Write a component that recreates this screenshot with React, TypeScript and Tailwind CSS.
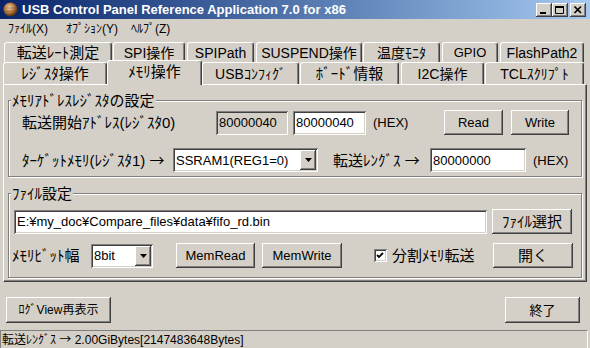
import React from 'react';

const raised =
  'bg-[#d4d0c8] shadow-[inset_-1px_-1px_0_#404040,inset_1px_1px_0_#ffffff,inset_-2px_-2px_0_#808080]';
const sunken =
  'shadow-[inset_1px_1px_0_#808080,inset_-1px_-1px_0_#ffffff,inset_2px_2px_0_#404040,inset_-2px_-2px_0_#d4d0c8]';

const Btn = ({ children, className = '' }: { children: React.ReactNode; className?: string }) => (
  <button type="button" className={`${raised} ${className} flex items-center justify-center leading-none`}>
    {children}
  </button>
);

const Field = ({ value, className = '', gray = false }: { value: string; className?: string; gray?: boolean }) => (
  <div
    className={`${sunken} ${gray ? 'bg-[#d4d0c8]' : 'bg-white'} ${className} flex items-center pl-[3px] text-[13px] leading-none`}
  >
    {value}
  </div>
);

const Combo = ({ value, className = '' }: { value: string; className?: string }) => (
  <div className={`${sunken} bg-white ${className} flex items-center p-[2px]`}>
    <span className="flex-1 pl-[1px] text-[13px] leading-none">{value}</span>
    <div className={`${raised} w-[16px] h-full flex items-center justify-center`}>
      <svg width="7" height="4" viewBox="0 0 7 4">
        <path d="M0 0h7L3.5 4z" fill="#000" />
      </svg>
    </div>
  </div>
);

// arrow glyph taken from the CJK font so it is wide like the original
const Arrow = () => <span className="font-['Noto_Sans_CJK_JP',sans-serif]">→</span>;

const tabBase =
  'flex items-center justify-center bg-[#d4d0c8] border-l border-t border-r border-white border-r-[#404040] rounded-t-[3px] shadow-[inset_-1px_0_0_#808080] leading-none whitespace-nowrap';

const topTabs = [
  { label: '転送ﾚｰﾄ測定', cls: 'ml-[1px] w-[108px] text-[15px]' },
  { label: 'SPI操作', cls: 'ml-[1px] w-[72px] text-[14px]' },
  { label: 'SPIPath', cls: 'ml-[2px] w-[67px] text-[14px]' },
  { label: 'SUSPEND操作', cls: 'ml-[2px] w-[106px] text-[14px]' },
  { label: '温度ﾓﾆﾀ', cls: 'ml-[1px] w-[77px] text-[14px]' },
  { label: 'GPIO', cls: 'ml-[2px] w-[56px] text-[13px]' },
  { label: 'FlashPath2', cls: 'ml-[2px] w-[84px] text-[14px]' },
];

const WinButton = ({ children, className = '' }: { children: React.ReactNode; className?: string }) => (
  <div className={`${raised} ${className} w-[16px] h-[14px] flex items-center justify-center`}>{children}</div>
);

export default function App() {
  return (
    <div className="w-[590px] h-[348px] overflow-hidden bg-[#d4d0c8] text-black font-['Liberation_Sans','Noto_Sans_CJK_JP',sans-serif] flex flex-col">
      {/* Title bar */}
      <div className="h-[19px] shrink-0 flex items-center bg-linear-to-r from-[#0a246a] to-[#a6caf0]">
        <svg width="15" height="15" viewBox="0 0 15 15" className="ml-[3px]">
          <defs>
            <radialGradient id="orb" cx="0.42" cy="0.38" r="0.62">
              <stop offset="0" stopColor="#f4dcb4" />
              <stop offset="0.55" stopColor="#b87a44" />
              <stop offset="1" stopColor="#4a2a12" />
            </radialGradient>
          </defs>
          <circle cx="7.5" cy="7.5" r="7" fill="url(#orb)" />
          <path d="M1.6 6h11.8M1.4 9h12.2" stroke="#8a5428" strokeWidth="1" opacity="0.6" />
        </svg>
        <span className="ml-[4px] text-white font-bold text-[13px] leading-none whitespace-nowrap">
          USB Control Panel Reference Application 7.0 for x86
        </span>
        <div className="ml-auto mr-[4px] flex items-center">
          <WinButton>
            <svg width="16" height="14" viewBox="0 0 16 14">
              <rect x="4" y="9" width="6" height="2" fill="#000" />
            </svg>
          </WinButton>
          <WinButton>
            <svg width="16" height="14" viewBox="0 0 16 14">
              <path d="M3.5 3.5h8v7h-8z" fill="none" stroke="#000" strokeWidth="1" />
              <rect x="3" y="3" width="9" height="2" fill="#000" />
            </svg>
          </WinButton>
          <WinButton className="ml-[2px]">
            <svg width="16" height="14" viewBox="0 0 16 14">
              <path d="M4.5 3.5l6.5 6.5M11 3.5l-6.5 6.5" stroke="#000" strokeWidth="1.7" />
            </svg>
          </WinButton>
        </div>
      </div>

      {/* Menu bar */}
      <div className="h-[19px] shrink-0 flex items-center text-[12px] leading-none">
        <span className="ml-[8px] w-[58px]">ﾌｧｲﾙ(X)</span>
        <span className="w-[65px]">ｵﾌﾟｼｮﾝ(Y)</span>
        <span>ﾍﾙﾌﾟ(Z)</span>
      </div>

      {/* Tab control */}
      <div className="px-[3px] pt-[4px] shrink-0">
        <div className="h-[18px] flex items-start">
          {topTabs.map((t) => (
            <div key={t.label} className={`${tabBase} ${t.cls} h-[20px]`}>
              {t.label}
            </div>
          ))}
        </div>
        <div className="h-[24px] flex items-start">
          <div className={`${tabBase} w-[104px] h-[22px] mt-[2px] text-[15px]`}>ﾚｼﾞｽﾀ操作</div>
          <div className={`${tabBase} relative z-10 w-[95px] h-[25px] pb-[3px] text-[15px]`}>ﾒﾓﾘ操作</div>
          <div className={`${tabBase} w-[97px] h-[22px] mt-[2px] text-[14px]`}>USBｺﾝﾌｨｸﾞ</div>
          <div className={`${tabBase} ml-[1px] w-[99px] h-[22px] mt-[2px] text-[15px]`}>ﾎﾞｰﾄﾞ情報</div>
          <div className={`${tabBase} ml-[2px] w-[83px] h-[22px] mt-[2px] text-[14px]`}>I2C操作</div>
          <div className={`${tabBase} ml-[1px] w-[99px] h-[22px] mt-[2px] text-[14px]`}>TCLｽｸﾘﾌﾟﾄ</div>
        </div>

        {/* Tab page */}
        <div className="h-[198px] border-t border-l border-r border-b border-white border-r-[#404040] border-b-[#404040] shadow-[inset_-1px_-1px_0_#808080] px-[4px] pt-[8px]">
          <fieldset className="min-w-0 border border-[#808080] shadow-[inset_1px_1px_0_#ffffff,1px_1px_0_#ffffff] pb-[4px]">
            <legend className="ml-[2px] px-[1px] bg-[#d4d0c8] text-[15px] leading-[15px]">ﾒﾓﾘｱﾄﾞﾚｽﾚｼﾞｽﾀの設定</legend>
            <div className="mt-[2px] h-[25px] flex items-center">
              <span className="ml-[13px] w-[194px] text-[15px] leading-none whitespace-nowrap">転送開始ｱﾄﾞﾚｽ(ﾚｼﾞｽﾀ0)</span>
              <Field value="80000040" gray className="w-[72px] h-[24px]" />
              <Field value="80000040" className="ml-[5px] w-[73px] h-[24px]" />
              <span className="ml-[7px] w-[71px] text-[13px] leading-none">(HEX)</span>
              <Btn className="w-[59px] h-[25px] text-[13px]">Read</Btn>
              <Btn className="ml-[8px] w-[58px] h-[25px] text-[13px]">Write</Btn>
            </div>
            <div className="mt-[13px] h-[24px] flex items-center">
              <span className="ml-[13px] w-[151px] text-[15px] leading-none whitespace-nowrap">
                ﾀｰｹﾞｯﾄﾒﾓﾘ(ﾚｼﾞｽﾀ1) <Arrow />
              </span>
              <Combo value="SSRAM1(REG1=0)" className="w-[145px] h-[24px]" />
              <span className="ml-[15px] w-[97px] text-[15px] leading-none whitespace-nowrap">
                転送ﾚﾝｸﾞｽ <Arrow />
              </span>
              <Field value="80000000" className="w-[96px] h-[24px]" />
              <span className="ml-[7px] text-[13px] leading-none">(HEX)</span>
            </div>
          </fieldset>

          <fieldset className="mt-[9px] min-w-0 border border-[#808080] shadow-[inset_1px_1px_0_#ffffff,1px_1px_0_#ffffff] pb-[9px]">
            <legend className="ml-[2px] px-[1px] bg-[#d4d0c8] text-[15px] leading-[15px]">ﾌｧｲﾙ設定</legend>
            <div className="mt-[8px] h-[25px] flex items-center">
              <Field value="E:¥my_doc¥Compare_files¥data¥fifo_rd.bin" className="ml-[5px] w-[473px] h-[24px]" />
              <Btn className="ml-[5px] w-[80px] h-[25px] text-[15px]">ﾌｧｲﾙ選択</Btn>
            </div>
            <div className="mt-[9px] h-[25px] flex items-center">
              <span className="ml-[3px] w-[79px] text-[15px] leading-none whitespace-nowrap">ﾒﾓﾘﾋﾞｯﾄ幅</span>
              <Combo value="8bit" className="w-[62px] h-[24px]" />
              <Btn className="ml-[23px] w-[79px] h-[25px] text-[13px]">MemRead</Btn>
              <Btn className="ml-[7px] w-[80px] h-[25px] text-[13px]">MemWrite</Btn>
              <div className={`${sunken} bg-white ml-[32px] w-[13px] h-[13px] flex items-center justify-center`}>
                <svg width="13" height="13" viewBox="0 0 13 13">
                  <path d="M3 6l2 2 4-4" fill="none" stroke="#000" strokeWidth="1.8" />
                </svg>
              </div>
              <span className="ml-[5px] w-[101px] text-[15px] leading-none whitespace-nowrap">分割ﾒﾓﾘ転送</span>
              <Btn className="w-[80px] h-[25px] text-[15px]">開く</Btn>
            </div>
          </fieldset>
        </div>
      </div>

      {/* Bottom buttons */}
      <div className="h-[48px] shrink-0 flex items-start justify-between pt-[15px]">
        <Btn className="ml-[6px] w-[105px] h-[26px] text-[12px]">ﾛｸﾞView再表示</Btn>
        <Btn className="mr-[10px] w-[75px] h-[26px] text-[13px]">終了</Btn>
      </div>

      {/* Status bar */}
      <div className="h-[18px] shrink-0 mr-[2px] border-t border-l border-[#808080] border-r border-r-white flex items-center pl-[1px] text-[12px] leading-none whitespace-nowrap">
        <span>
          転送ﾚﾝｸﾞｽ <Arrow /> 2.00GiBytes[2147483648Bytes]
        </span>
      </div>
    </div>
  );
}
